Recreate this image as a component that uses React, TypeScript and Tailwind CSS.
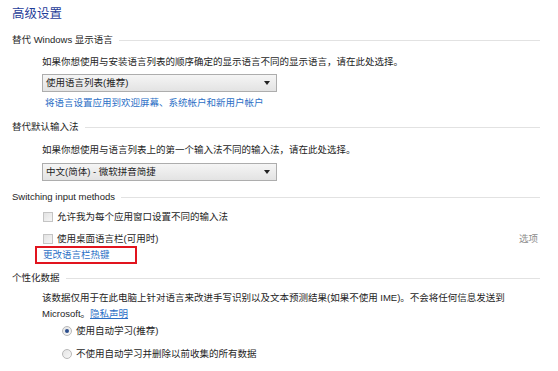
const font = {
  fontFamily: '"Liberation Sans", "Noto Sans CJK SC", sans-serif',
};

function Heading({ children }: { children: React.ReactNode }) {
  return (
    <div className="flex h-[14px] items-center gap-[6px] pl-3 pr-[18px] text-[9.5px] text-[#1e1e1e]">
      <span className="whitespace-nowrap">{children}</span>
      <div className="h-px flex-1 bg-[#e2e2e2]" />
    </div>
  );
}

function Select({ value }: { value: string }) {
  return (
    <div className="ml-[42px] flex h-[18px] w-[235px] items-center justify-between border border-[#adadad] bg-gradient-to-b from-[#f5f5f5] to-[#e3e3e3] pl-[3px] pr-[6px] text-[9.5px] text-[#1e1e1e]">
      <span>{value}</span>
      <svg width="6" height="4" viewBox="0 0 6 4">
        <path d="M0 0h6L3 4z" fill="#222" />
      </svg>
    </div>
  );
}

function Checkbox({ label }: { label: string }) {
  return (
    <div className="flex h-[14px] items-center gap-[4px] pl-[43px] text-[9.5px] text-[#1e1e1e]">
      <div className="h-[10px] w-[10px] border border-[#c4c4c4] bg-gradient-to-br from-[#e2e2e2] to-[#f6f6f6]" />
      <span>{label}</span>
    </div>
  );
}

function Radio({ label, checked }: { label: string; checked?: boolean }) {
  return (
    <div className="flex h-[14px] items-center gap-[4px] pl-[62px] text-[9.5px] text-[#1e1e1e]">
      <div className="flex h-[10px] w-[10px] items-center justify-center rounded-full border border-[#b8b8b8] bg-gradient-to-br from-[#e4e4e4] to-[#f8f8f8]">
        {checked && <div className="h-[4px] w-[4px] rounded-full bg-[#2b4d8c]" />}
      </div>
      <span>{label}</span>
    </div>
  );
}

export default function App() {
  return (
    <div className="h-[371px] w-[558px] overflow-hidden bg-white" style={font}>
      <div className="flex h-[28px] items-center pl-3 text-[12.5px] text-[#1f3d99]">高级设置</div>

      <div className="mt-[5px]">
        <Heading>替代 Windows 显示语言</Heading>
      </div>
      <div className="mt-[8px] flex h-[14px] items-center pl-[42px] text-[9.5px] text-[#1e1e1e]">
        如果你想使用与安装语言列表的顺序确定的显示语言不同的显示语言，请在此处选择。
      </div>
      <div className="mt-[5px]">
        <Select value="使用语言列表(推荐)" />
      </div>
      <div className="mt-[4px] flex h-[14px] items-center pl-[45px] text-[9.5px] text-[#2c6fc6]">
        将语言设置应用到欢迎屏幕、系统帐户和新用户帐户
      </div>

      <div className="mt-[10px]">
        <Heading>替代默认输入法</Heading>
      </div>
      <div className="mt-[9px] flex h-[14px] items-center pl-[42px] text-[9.5px] text-[#1e1e1e]">
        如果你想使用与语言列表上的第一个输入法不同的输入法，请在此处选择。
      </div>
      <div className="mt-[6px]">
        <Select value="中文(简体) - 微软拼音简捷" />
      </div>

      <div className="mt-[9px]">
        <Heading>Switching input methods</Heading>
      </div>
      <div className="mt-[6px]">
        <Checkbox label="允许我为每个应用窗口设置不同的输入法" />
      </div>
      <div className="mt-[8px] flex items-center pr-[20px]">
        <div className="flex-1">
          <Checkbox label="使用桌面语言栏(可用时)" />
        </div>
        <span className="text-[9.5px] leading-[14px] text-[#8c8c8c]">选项</span>
      </div>
      <div className="ml-[35px] flex h-[18px] w-[102px] items-center border-2 border-[#e1141e] pl-[6px] text-[9.5px] text-[#2c6fc6]">
        更改语言栏热键
      </div>

      <div className="mt-[7px]">
        <Heading>个性化数据</Heading>
      </div>
      <div className="mt-[5px] pl-[42px] text-[9.5px] leading-[16px] text-[#1e1e1e]">
        该数据仅用于在此电脑上针对语言来改进手写识别以及文本预测结果(如果不使用 IME)。不会将任何信息发送到
        <br />
        Microsoft。<span className="text-[#2c6fc6] underline">隐私声明</span>
      </div>
      <div className="mt-[2px]">
        <Radio label="使用自动学习(推荐)" checked />
      </div>
      <div className="mt-[9px]">
        <Radio label="不使用自动学习并删除以前收集的所有数据" />
      </div>
    </div>
  );
}
